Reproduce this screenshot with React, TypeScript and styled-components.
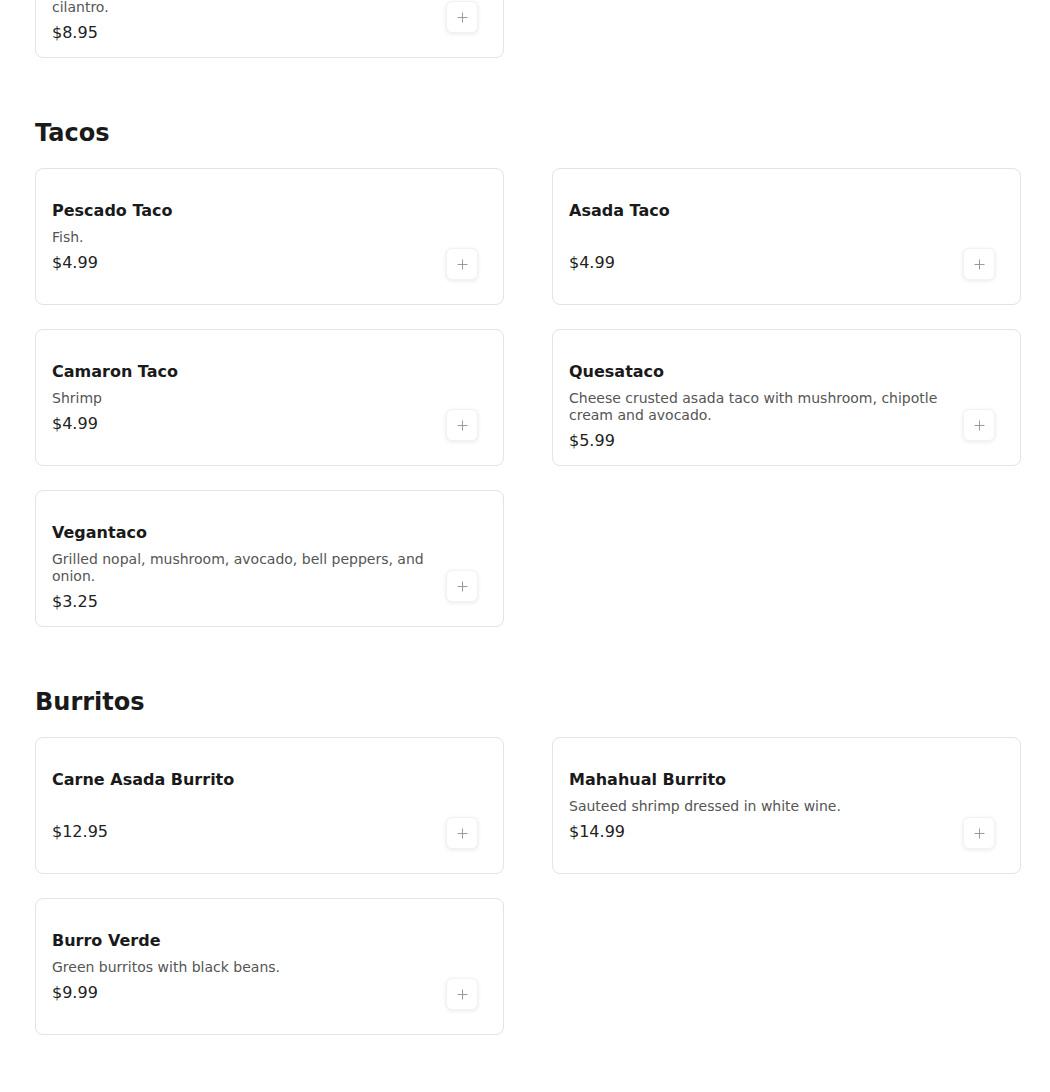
import React from "react";
import styled, { createGlobalStyle } from "styled-components";

interface Item {
  name: string;
  description?: string;
  price: string;
}

interface Category {
  title?: string;
  items: Item[];
}

const menu: Category[] = [
  {
    items: [
      {
        name: "Pescado Burrito",
        description: "Grilled fish with rice, beans, cabbage, pico de gallo, cilantro.",
        price: "$8.95",
      },
    ],
  },
  {
    title: "Tacos",
    items: [
      { name: "Pescado Taco", description: "Fish.", price: "$4.99" },
      { name: "Asada Taco", price: "$4.99" },
      { name: "Camaron Taco", description: "Shrimp", price: "$4.99" },
      {
        name: "Quesataco",
        description: "Cheese crusted asada taco with mushroom, chipotle cream and avocado.",
        price: "$5.99",
      },
      {
        name: "Vegantaco",
        description: "Grilled nopal, mushroom, avocado, bell peppers, and onion.",
        price: "$3.25",
      },
    ],
  },
  {
    title: "Burritos",
    items: [
      { name: "Carne Asada Burrito", price: "$12.95" },
      { name: "Mahahual Burrito", description: "Sauteed shrimp dressed in white wine.", price: "$14.99" },
      { name: "Burro Verde", description: "Green burritos with black beans.", price: "$9.99" },
    ],
  },
];

const GlobalStyle = createGlobalStyle`
  html, body {
    margin: 0;
    padding: 0;
    background: #ffffff;
    font-family: "DejaVu Sans", Verdana, sans-serif;
    color: #1a1a1a;
  }
  * { box-sizing: border-box; }
`;

const Page = styled.main`
  padding: 0 29px 0 35px;
  overflow: hidden;
`;

// the first section is only partly in view, as if the page were scrolled
const Section = styled.section<{ $scrolled?: boolean }>`
  padding-bottom: 59px;
  margin-top: ${(p) => (p.$scrolled ? "-79px" : "0")};
`;

const Heading = styled.h2`
  margin: 0 0 19px;
  font-size: 24px;
  line-height: 32px;
  font-weight: 700;
  color: #1a1a1a;
`;

const Grid = styled.div`
  display: grid;
  grid-template-columns: 469px 469px;
  column-gap: 48px;
  row-gap: 24px;
`;

const Card = styled.div`
  display: flex;
  gap: 16px;
  height: 137px;
  padding: 32px 24px 24px 16px;
  border: 1px solid #e3e3e3;
  border-radius: 8px;
  background: #fff;
`;

const Info = styled.div`
  flex: 1;
  display: flex;
  flex-direction: column;
  align-self: flex-start;
`;

const Name = styled.div`
  font-size: 16px;
  line-height: 20px;
  font-weight: 700;
  color: #1a1a1a;
`;

const Description = styled.div`
  margin-top: 8px;
  min-height: 17px;
  font-size: 14px;
  line-height: 17px;
  color: #555;
`;

const Price = styled.div`
  margin-top: 7px;
  font-size: 16px;
  line-height: 20px;
  color: #222;
`;

const AddButton = styled.button`
  align-self: flex-end;
  flex: none;
  width: 32px;
  height: 32px;
  margin-right: 1px;
  display: flex;
  align-items: center;
  justify-content: center;
  padding: 0;
  border: 1px solid #f2f2f2;
  border-radius: 6px;
  background: #fff;
  box-shadow: 0 1px 4px rgba(0, 0, 0, 0.09);
  cursor: pointer;
`;

const PlusIcon = () => (
  <svg width="11" height="11" viewBox="0 0 11 11" fill="none">
    <path d="M5.5 0.5v10M0.5 5.5h10" stroke="#9a9a9a" strokeWidth="1" />
  </svg>
);

const MenuCard = ({ item }: { item: Item }) => (
  <Card>
    <Info>
      <Name>{item.name}</Name>
      <Description>{item.description}</Description>
      <Price>{item.price}</Price>
    </Info>
    <AddButton aria-label={`Add ${item.name}`}>
      <PlusIcon />
    </AddButton>
  </Card>
);

export default function App() {
  return (
    <>
      <GlobalStyle />
      <Page>
        {menu.map((cat, i) => (
          <Section key={i} $scrolled={!cat.title}>
            {cat.title && <Heading>{cat.title}</Heading>}
            <Grid>
              {cat.items.map((item) => (
                <MenuCard key={item.name} item={item} />
              ))}
            </Grid>
          </Section>
        ))}
      </Page>
    </>
  );
}
